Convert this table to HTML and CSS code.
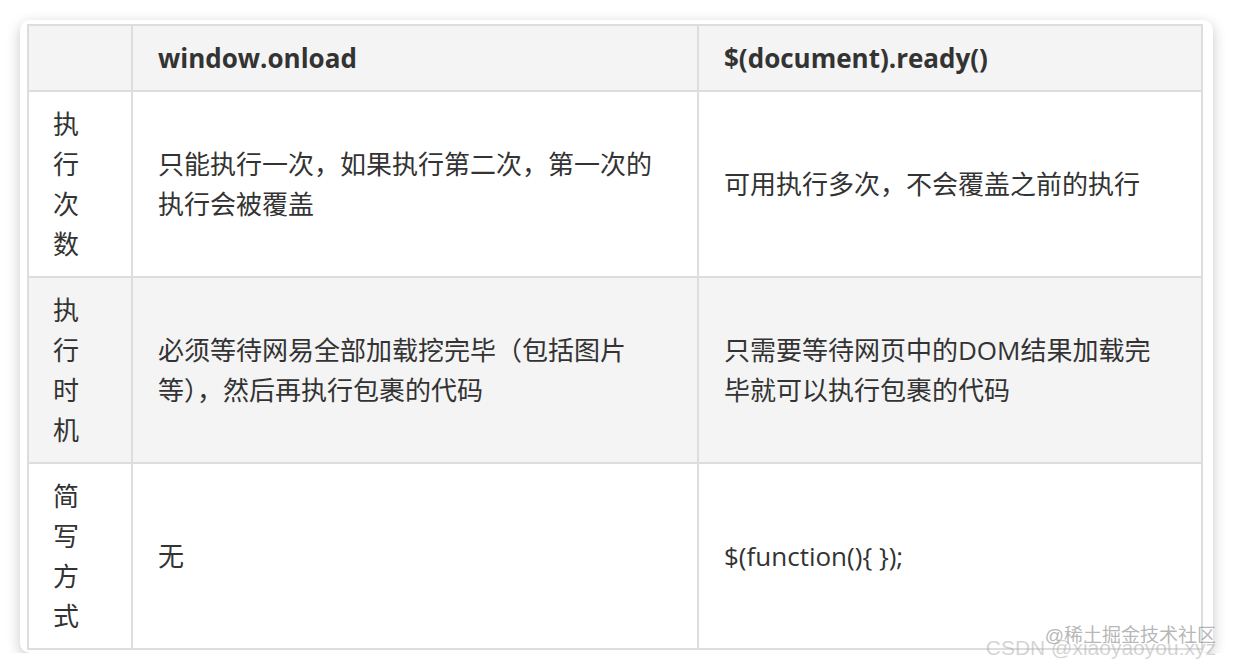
FILE: index.html
```
<!DOCTYPE html>
<html lang="zh-CN">
<head>
    <meta charset="UTF-8">
    <meta name="viewport" content="width=device-width, initial-scale=1.0">
    <title>window.onload 与 $(document).ready()</title>
    <link rel="stylesheet" href="styles.css">
</head>
<body>
    <div class="card">
        <table class="compare">
            <thead>
                <tr>
                    <th class="label"></th>
                    <th class="col-a">window.onload</th>
                    <th class="col-b">$(document).ready()</th>
                </tr>
            </thead>
            <tbody>
                <tr>
                    <td class="label"><span class="stack">执行次数</span></td>
                    <td>只能执行一次，如果执行第二次，第一次的执行会被覆盖</td>
                    <td>可用执行多次，不会覆盖之前的执行</td>
                </tr>
                <tr class="alt">
                    <td class="label"><span class="stack">执行时机</span></td>
                    <td>必须等待网易全部加载挖完毕（包括图片等），然后再执行包裹的代码</td>
                    <td>只需要等待网页中的DOM结果加载完毕就可以执行包裹的代码</td>
                </tr>
                <tr>
                    <td class="label"><span class="stack">简写方式</span></td>
                    <td>无</td>
                    <td>$(function(){ });</td>
                </tr>
            </tbody>
        </table>
    </div>

    <!-- 水印 -->
    <div class="watermark">
        <span class="wm-top">@稀土掘金技术社区</span>
        <span class="wm-bottom">CSDN @xiaoyaoyou.xyz</span>
    </div>
</body>
</html>
```

FILE: styles.css
```
body {
    margin: 0;
    padding: 0;
    background-color: #ffffff;
    font-family: "Open Sans", "Noto Sans CJK SC", sans-serif;
    color: #333333;
}

.card {
    width: 1193px;
    margin: 20px 0 0 20px;
    padding: 4px 10px 3px 7px;
    box-sizing: border-box;
    background-color: #ffffff;
    border-radius: 10px;
    box-shadow: 0 4px 14px rgba(0, 0, 0, 0.22);
}

.compare {
    width: 1176px;
    border-collapse: collapse;
    table-layout: fixed;
    font-size: 26px;
    line-height: 40px;
}

.compare th,
.compare td {
    border: 2px solid #dddddd;
    padding: 12px 25px;
    text-align: left;
    vertical-align: middle;
}

.compare th {
    font-weight: 700;
    background-color: #f4f4f4;
}

.compare .label {
    width: 104px;
    padding: 12px 24px;
    box-sizing: border-box;
}

.stack {
    display: block;
    width: 28px;
    word-break: break-all;
}

.col-a {
    width: 514px;
}

.alt td {
    background-color: #f4f4f4;
}

.watermark {
    position: absolute;
    right: 18px;
    top: 626px;
    display: flex;
    flex-direction: column;
    align-items: flex-end;
    font-family: "Liberation Sans", "Noto Sans CJK SC", sans-serif;
    color: rgba(120, 120, 120, 0.55);
    pointer-events: none;
}

.wm-top {
    font-size: 19px;
    line-height: 20px;
}

.wm-bottom {
    font-size: 21px;
    line-height: 20px;
    margin-top: -8px;
    color: rgba(170, 170, 170, 0.5);
}
```
